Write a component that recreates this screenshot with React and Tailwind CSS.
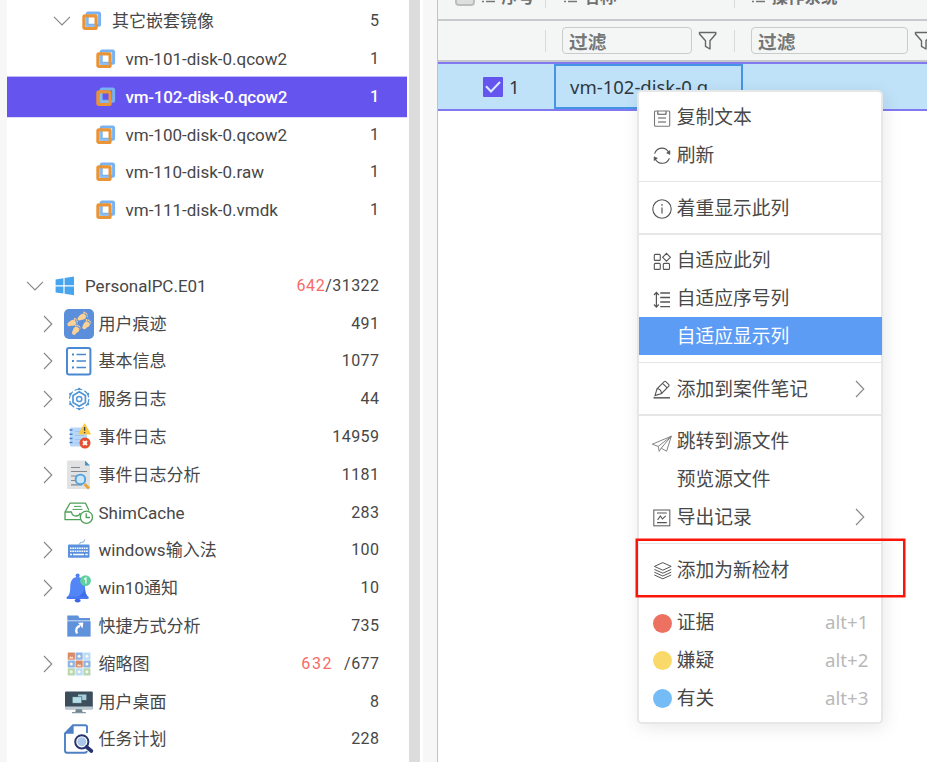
import React from "react";

const CJK = "font-['Roboto','Noto_Sans_CJK_SC',sans-serif]";
const NOTO = "font-['Noto_Sans','Noto_Sans_CJK_SC',sans-serif]";

function Svg({ w, h, className = "", children }) {
  return (
    <svg width={w} height={h} viewBox={`0 0 ${w} ${h}`} fill="none" className={`shrink-0 ${className}`}>
      {children}
    </svg>
  );
}

const DiskIcon = () => (
  <Svg w={20} h={20}>
    <rect x="5.2" y="1.9" width="12.4" height="12.4" rx="1" stroke="#78b2f0" strokeWidth="3" />
    <rect x="1.9" y="4.9" width="12.2" height="12.6" rx="1" stroke="#eb9435" strokeWidth="3.2" />
    <path d="M4.4 6.5V14.9H12.5" stroke="#8fbdec" strokeWidth="1.9" />
  </Svg>
);

const WindowsIcon = () => (
  <Svg w={20} h={20}>
    <path d="M0.6 3.4 8.4 2.2V9.2H0.6zM9.6 2 19 0.6V9.2H9.6zM0.6 10.4H8.4V17.6L0.6 16.6zM9.6 10.4H19V19.2L9.6 17.8z" fill="#47a4ee" />
  </Svg>
);

const foot = (
  <g fill="#fbd195">
    <path d="M-1.5 -4C1.8 -5.2 4.2 -3.2 3.5 -0.8C3 1 2.2 1.6 2 3.6C1.8 5.8 -1.9 6 -2.3 3.6C-2.6 1.4 -3.9 -2.8 -1.5 -4z" />
    <circle cx="-2.6" cy="-5" r="1.1" />
    <circle cx="-0.6" cy="-6" r="0.9" />
    <circle cx="1.3" cy="-5.9" r="0.8" />
    <circle cx="3" cy="-4.9" r="0.7" />
  </g>
);
const FootIcon = () => (
  <Svg w={30} h={30}>
    <rect width="30" height="30" rx="5" fill="#5b8edb" />
    <g transform="translate(8 14) rotate(62) scale(.9)">{foot}</g>
    <g transform="translate(18 8) rotate(55) scale(.9)">{foot}</g>
    <g transform="translate(11.5 21.5) rotate(30) scale(.9)">{foot}</g>
    <g transform="translate(22 16) rotate(35) scale(.9)">{foot}</g>
  </Svg>
);

const ListIcon = () => (
  <Svg w={30} h={30}>
    <rect x="3" y="1.9" width="23.4" height="26.6" rx="2" stroke="#4a88d2" strokeWidth="2" />
    <path d="M12.5 8.5H22M12.5 15H22M12.5 21.5H22" stroke="#4a88d2" strokeWidth="1.4" />
    <path d="M8 8.5h2M8 15h2M8 21.5h2" stroke="#4a88d2" strokeWidth="1.8" />
  </Svg>
);

const HexIcon = () => (
  <Svg w={30} h={30}>
    <g stroke="#5196d6">
      <circle cx="15.2" cy="15" r="9.7" strokeDasharray="8 2.16" strokeWidth="1.1" />
      <path d="M15.2 7.8 21.4 11.4V18.6L15.2 22.2 9 18.6V11.4z" strokeWidth="1.7" strokeLinejoin="round" />
      <circle cx="15.2" cy="15" r="2.6" strokeWidth="1.5" />
    </g>
    <g fill="#5196d6">
      <circle cx="15.2" cy="5" r="1.3" /><circle cx="15.2" cy="25" r="1.3" />
      <circle cx="6.3" cy="9.9" r="1.2" /><circle cx="24.1" cy="9.9" r="1.2" />
      <circle cx="6.3" cy="20.1" r="1.2" /><circle cx="24.1" cy="20.1" r="1.2" />
    </g>
  </Svg>
);

const EventIcon = () => (
  <Svg w={30} h={30}>
    <rect x="6" y="5.5" width="17" height="19" rx="1" fill="#b6d6fa" />
    <path d="M11 9.5h9M11 13.5h9M11 17.5h7M11 21h6" stroke="#9fc5f3" strokeWidth="1" />
    <path d="M5.5 8h3M5.5 12.2h3M5.5 16.4h3M5.5 20.6h3" stroke="#4c7fc0" strokeWidth="1.5" />
    <path d="M20.6 2 26.2 12H15z" fill="#fbc940" stroke="#fbc940" strokeWidth="1.2" strokeLinejoin="round" />
    <path d="M20.6 5v3.8M20.6 10v1.3" stroke="#444" strokeWidth="1.4" />
    <circle cx="21" cy="21" r="5.5" fill="#e84e2c" />
    <path d="M19 19l4 4M23 19l-4 4" stroke="#fff" strokeWidth="1.9" />
  </Svg>
);

const AnalysisIcon = () => (
  <Svg w={30} h={30}>
    <path d="M3 1.5Q3 .5 4 .5H21L26 5.5V28Q26 29 25 29H4Q3 29 3 28z" fill="#e1e2e4" />
    <path d="M21 .5 26 5.5H21z" fill="#4695c8" />
    <path d="M7 7.5h9M7 11.5h16M7 16h8M7 20.5h6M7 24.8h11" stroke="#85878a" strokeWidth="1.2" />
    <circle cx="16.4" cy="19.4" r="4.8" fill="#cfe5f8" stroke="#4da2df" strokeWidth="1.9" />
    <path d="M20.5 24 25 28.4" stroke="#e7a23b" strokeWidth="2.8" />
  </Svg>
);

const ShimIcon = () => (
  <Svg w={30} h={30}>
    <g stroke="#4da058" strokeWidth="1.3" strokeLinejoin="round">
      <path d="M16 21.6H1V14L6 5.2H21.5L25 12.5" />
      <path d="M1 14H7.5Q8 18 12 18 15.5 18 16.3 15" />
      <path d="M10 8.4H17.5M8.5 11.4H18.5" strokeWidth="1" />
      <circle cx="22.4" cy="19.2" r="6.1" fill="#fff" />
      <path d="M22.2 15.2V19.5H26" />
    </g>
  </Svg>
);

const KeyboardIcon = () => (
  <Svg w={30} h={30}>
    <path d="M15.5 9.5Q15.5 7.2 17.5 7.4 20.5 7.6 20.8 4.5" stroke="#80a9df" strokeWidth="1" />
    <rect x="4" y="9.5" width="21.5" height="13.3" rx="1" fill="#5b91dc" />
    <path d="M6 13.2h18M6 16.2h18" stroke="#fff" strokeWidth="1.6" strokeDasharray="1.6 .7" />
    <path d="M6 19.4h2M9 19.4h11M21.3 19.4h2.4" stroke="#fff" strokeWidth="1.5" />
  </Svg>
);

const BellIcon = () => (
  <Svg w={30} h={30}>
    <circle cx="13.6" cy="2.4" r="2" fill="#4b7df4" />
    <path d="M13.6 4C8 4 6.4 9 6.3 13 6.2 19 5.6 21.5 3 24.5H24.5C21.8 21.5 21 19 21 13 21 8 18.5 4 13.6 4z" fill="#5285f5" />
    <path d="M21 15Q18 23 12 24.5H24.5C21.5 21 21.2 19 21 15z" fill="#3f6eeb" />
    <rect x="2.5" y="23.6" width="22.2" height="2.4" rx="1.2" fill="#4778f2" />
    <ellipse cx="13.6" cy="27.6" rx="3" ry="1.8" fill="#3c65e5" />
    <circle cx="21.5" cy="7.6" r="5.4" fill="#60d09f" />
    <path d="M20 6.2 21.9 5V10.6" stroke="#fff" strokeWidth="1.2" />
  </Svg>
);

const ShortcutIcon = () => (
  <Svg w={30} h={30}>
    <path d="M3.3 4.5H14L15.5 7H26V9.4H3.3z" fill="#5f92da" />
    <rect x="3.3" y="10.2" width="23.3" height="15.4" fill="#5f92da" />
    <path d="M13 22.5C11 18.5 13 15.5 16 15" stroke="#fff" strokeWidth="2.3" />
    <path d="M14 11.8 19.3 11.5 18.6 17.6z" fill="#fff" />
  </Svg>
);

const cells = ["#d98a67", "#8eb4e8", "#b9dcf8", "#8eb4e8", "#d98a67", "#8eb4e8", "#b8d8b4", "#b9dcf8", "#b8d8b4"];
const ThumbIcon = () => (
  <Svg w={30} h={30}>
    {cells.map((c, i) => {
      const x = 3.7 + (i % 3) * 7.8, y = 3.6 + Math.floor(i / 3) * 7.8;
      const warm = c === "#d98a67";
      return (
        <g key={i}>
          <rect x={x} y={y} width="7.2" height="7.2" rx=".4" fill={c} />
          {warm
            ? <path d={`M${x + 1.2} ${y + 5.8}l1.6-2.2 1.2 1.1.9-.7 1 1.8z`} fill="#ffe3c7" />
            : <circle cx={x + 3.6} cy={y + 3.6} r="1.5" fill="#fff8df" />}
        </g>
      );
    })}
  </Svg>
);

const DesktopIcon = () => (
  <Svg w={30} h={30}>
    <rect x="1" y="4.5" width="27.8" height="17.8" rx="1" fill="#3c4e5b" />
    <path d="M1 19.5H28.8V21.3Q28.8 22.3 27.8 22.3H2Q1 22.3 1 21.3z" fill="#bccbd3" />
    <rect x="14" y="7.5" width="8.4" height="5.6" fill="#a5cfdc" />
    <rect x="8.2" y="9.8" width="9.6" height="6.4" fill="#b4dfe9" stroke="#3c4e5b" strokeWidth=".6" />
    <path d="M11.8 22.3H18L18.5 25H11.3z" fill="#71858f" />
    <path d="M8 25.6H21.8" stroke="#8297a1" strokeWidth="1.3" />
  </Svg>
);

const TaskIcon = () => (
  <Svg w={30} h={30}>
    <path d="M23 9V3Q23 1.2 21.2 1.2H9L1 9.5V26.4Q1 28.8 3.4 28.8H20.5Q22.6 28.8 23 27" stroke="#4d80c5" strokeWidth="1.9" />
    <path d="M9.6 .8V9.8H.8z" fill="#4d80c5" />
    <circle cx="17.8" cy="17.8" r="6.6" fill="#fff" stroke="#26356f" strokeWidth="2" />
    <circle cx="17.8" cy="17.8" r="4.5" fill="#a9c8e9" />
    <path d="M22.6 23 27.4 27" stroke="#26356f" strokeWidth="3.6" strokeLinecap="round" />
  </Svg>
);

const ChevronDown = () => (
  <Svg w={18} h={18}><path d="M1 4.8 9 13 17 4.8" stroke="#858585" strokeWidth="1.1" /></Svg>
);
const ChevronRight = () => (
  <Svg w={12} h={18}><path d="M2 1 9.8 9 2 17" stroke="#858585" strokeWidth="1.1" /></Svg>
);

const tree = [
  { level: 1, open: true, icon: DiskIcon, label: "其它嵌套镜像", count: "5" },
  { level: 2, icon: DiskIcon, label: "vm-101-disk-0.qcow2", count: "1" },
  { level: 2, icon: DiskIcon, label: "vm-102-disk-0.qcow2", count: "1", selected: true },
  { level: 2, icon: DiskIcon, label: "vm-100-disk-0.qcow2", count: "1" },
  { level: 2, icon: DiskIcon, label: "vm-110-disk-0.raw", count: "1" },
  { level: 2, icon: DiskIcon, label: "vm-111-disk-0.vmdk", count: "1" },
  null,
  { level: 0, open: true, icon: WindowsIcon, label: "PersonalPC.E01", hot: "642", count: "/31322" },
  { level: 3, more: true, icon: FootIcon, label: "用户痕迹", count: "491" },
  { level: 3, more: true, icon: ListIcon, label: "基本信息", count: "1077" },
  { level: 3, more: true, icon: HexIcon, label: "服务日志", count: "44" },
  { level: 3, more: true, icon: EventIcon, label: "事件日志", count: "14959" },
  { level: 3, more: true, icon: AnalysisIcon, label: "事件日志分析", count: "1181" },
  { level: 3, icon: ShimIcon, label: "ShimCache", count: "283" },
  { level: 3, more: true, icon: KeyboardIcon, label: "windows输入法", count: "100" },
  { level: 3, more: true, icon: BellIcon, label: "win10通知", count: "10" },
  { level: 3, icon: ShortcutIcon, label: "快捷方式分析", count: "735" },
  { level: 3, more: true, icon: ThumbIcon, label: "缩略图", hot: "632", wide: true, count: "/677" },
  { level: 3, icon: DesktopIcon, label: "用户桌面", count: "8" },
  { level: 3, icon: TaskIcon, label: "任务计划", count: "228" },
];

const pads = ["pl-[19px]", "pl-[46px]", "pl-[89px]", "pl-[35px]"];
const gaps = ["gap-[10px]", "gap-[10px]", "gap-[9.5px]", "gap-[4.5px]"];

function TreeRow({ row }) {
  if (!row) return <div className="h-[37.8px]" />;
  const Icon = row.icon;
  return (
    <div className={`flex h-[37.8px] items-center pr-[27.5px] ${pads[row.level]} ${row.selected ? "bg-[#6654ee] font-medium tracking-[-0.22px] text-white shadow-[0_-1.4px_0_#6654ee,0_1.2px_0_#6654ee]" : "text-[#474747]"}`}>
      {row.level !== 2 && (
        <span className={row.level === 3 ? "w-[22px]" : "w-[29px]"}>
          {row.open && <ChevronDown />}
          {row.more && <ChevronRight />}
        </span>
      )}
      <span className={`flex items-center ${gaps[row.level]}`}>
        <Icon />
        <span className="whitespace-nowrap text-[17px] leading-6">{row.label}</span>
      </span>
      <span className="ml-auto whitespace-nowrap text-[16px] leading-6 tracking-[0.45px]">
        {row.hot && <span className={row.wide ? "mr-[11px] tracking-[1.6px] text-[#f66b66]" : "tracking-[0.6px] text-[#f66b66]"}>{row.hot}</span>}
        {row.count}
      </span>
    </div>
  );
}

const SortGlyph = () => (
  <Svg w={16} h={16}>
    <path d="M1 3h2M5 3h9M1 8h2M5 8h9M1 12.6h2M5 12.6h9" stroke="#777" strokeWidth="1.5" />
  </Svg>
);
const Funnel = () => (
  <Svg w={20} h={20}>
    <path d="M1.5 1.5H17.8V3L12 9.8V18L7.5 15.4V9.8L1.5 3z" stroke="#666" strokeWidth="1.4" strokeLinejoin="round" />
  </Svg>
);

const HeadCell = ({ label, className }) => (
  <div className={`flex items-center gap-[4.5px] ${className}`}>
    <SortGlyph />
    <span className="whitespace-nowrap text-[16.5px] font-bold leading-[22px] text-[#707070]">{label}</span>
  </div>
);

const FilterBox = ({ className }) => (
  <div className={`flex h-[27px] shrink-0 items-center rounded-[4px] border-[1.5px] border-[#cacccc] pl-[6px] pt-[2px] text-[18.7px] font-bold leading-6 text-[#767878] ${className}`}>过滤</div>
);

function Table() {
  return (
    <main className={`min-w-0 flex-1 overflow-hidden border-l border-[#bfc3c8] bg-white ${NOTO}`}>
      <div className="flex h-[21px] overflow-hidden border-b-2 border-[#c6cacd] bg-[#f4f6f6]">
        <div className="-mt-[14px] flex h-[22px] shrink-0">
          <div className="flex w-[108px] shrink-0 items-center border-r border-[#d8dadb] pl-[17px]">
            <span className="mt-[-3px] h-5 w-5 rounded-[4px] border-2 border-[#bdbdbd] bg-[#dedede]" />
            <HeadCell label="序号" className="ml-[6px]" />
          </div>
          <HeadCell label="名称" className="w-[188px] shrink-0 pl-[17px]" />
          <HeadCell label="操作系统" className="border-l border-[#d8dadb] pl-[16px]" />
        </div>
      </div>
      <div className="flex h-[41px] items-center overflow-hidden border-b-2 border-[#c4c8cb] bg-[#f4f6f6]">
        <div className="h-[22px] w-[108px] shrink-0 border-r border-[#d8dadb]" />
        <FilterBox className="ml-4 mr-[6px] w-[130px]" />
        <Funnel />
        <div className="ml-[16px] h-[22px] w-px shrink-0 bg-[#d8dadb]" />
        <FilterBox className="ml-[16px] mr-[6px] w-[157px]" />
        <Funnel />
      </div>
      <div className="flex h-[49px] border-y-2 border-[#8179f0] bg-[#bfe2f9] text-[18.5px] text-[#303840]">
        <div className="flex w-[116px] shrink-0 items-center pl-[45px] pt-px">
          <span className="flex h-5 w-5 items-center justify-center rounded-[1px] bg-[#6654ee]">
            <svg width="20" height="20" viewBox="0 0 20 20" fill="none"><path d="M3 9.2 8 14.5 17 5" stroke="#d8ecff" strokeWidth="2" /></svg>
          </span>
          <span className="ml-[6px]">1</span>
        </div>
        <div className="flex w-[189px] shrink-0 items-center border-2 border-[#4595e4] pl-[14px] pt-px">
          <span className="whitespace-nowrap">vm-102-disk-0.q</span>
        </div>
      </div>
    </main>
  );
}

const M = ({ children }) => (
  <svg width="22" height="22" viewBox="0 0 22 22" fill="none" stroke="#555" strokeWidth="1.1" className="mt-[3px] shrink-0">{children}</svg>
);
const CopyIcon = () => (
  <M><rect x="3.5" y="3" width="15.2" height="15.2" rx="1" stroke="#777" /><path d="M6.8 3.2V6.2H15V3.2M7 10H15M7 14H15" /></M>
);
const RefreshIcon = () => (
  <M><path d="M3.6 8.6C6 1.8 14.6 1.2 17.8 7.6M18.4 13.2C15.8 19.8 7.4 20 4.2 13.9" /><path d="M18.9 5.6V9.4L15.6 8zM3.1 15.6V11.8L6.4 13.2z" fill="#555" strokeWidth=".6" /></M>
);
const InfoIcon = () => (
  <M><circle cx="11" cy="11" r="9.2" /><path d="M11 9.5V15.5M11 6V7.8" strokeWidth="1.2" /></M>
);
const GridIcon = () => (
  <M><rect x="3.3" y="3.4" width="6" height="6" rx="1" /><rect x="3.3" y="12.4" width="6" height="6" rx="1" /><rect x="12.3" y="12.4" width="6.2" height="6" rx="1" /><path d="M15.5 2.4 19.4 6.3 15.5 10.2 11.6 6.3z" /></M>
);
const SpacingIcon = () => (
  <M><path d="M9.2 4H19M9.2 8.5H19M9.2 13H19M9.2 17.6H19" strokeWidth="1.4" /><path d="M5.4 4V17.5M3 6 5.4 3.4 7.8 6M3 15.5 5.4 18.1 7.8 15.5" strokeWidth="1.2" /></M>
);
const PenIcon = () => (
  <M><path d="M4 16.6 6 9.8 13.2 2.6Q14 2 14.8 2.6L17.8 5.6Q18.4 6.4 17.8 7.2L10.6 14.4zM11.6 4.3 16.2 8.9M6 9.8Q9.8 9.8 10.6 14.4" /><path d="M2.5 18.8H19" stroke="#666" strokeWidth="1.6" /></M>
);
const PlaneIcon = () => (
  <M><path d="M1.3 12.2 20.3 4.2 15.6 19.2 10.2 16.2M1.3 12.2 7.2 14.4 20.3 4.2 10.2 16.2 8.2 19.4 7.2 14.4" stroke="#777" strokeWidth=".9" strokeLinejoin="round" /></M>
);
const ExportIcon = () => (
  <M><rect x="2.8" y="3" width="16" height="15.8" stroke="#666" /><path d="M6 6H15.8M6 15.6H15.8M6.6 12.8 9.4 9 11.4 12 14.8 8.8" /></M>
);
const LayersIcon = () => (
  <M><path d="M11.8 2.6 20.2 6.4 11.8 10.2 3.4 6.4zM3.4 9.4 11.8 13.2 20.2 9.4M3.4 12.2 11.8 16 20.2 12.2M3.4 15 11.8 18.8 20.2 15" strokeWidth="1" /></M>
);

const groups = [
  [{ icon: CopyIcon, label: "复制文本" }, { icon: RefreshIcon, label: "刷新" }],
  [{ icon: InfoIcon, label: "着重显示此列" }],
  [{ icon: GridIcon, label: "自适应此列" }, { icon: SpacingIcon, label: "自适应序号列" }, { label: "自适应显示列", active: true }],
  [{ icon: PenIcon, label: "添加到案件笔记", sub: true }],
  [{ icon: PlaneIcon, label: "跳转到源文件" }, { label: "预览源文件" }, { icon: ExportIcon, label: "导出记录", sub: true }],
  [{ icon: LayersIcon, label: "添加为新检材" }],
  [
    { dot: "bg-[#ed7161]", label: "证据", hint: "alt+1" },
    { dot: "bg-[#f8d96a]", label: "嫌疑", hint: "alt+2" },
    { dot: "bg-[#75bbf5]", label: "有关", hint: "alt+3" },
  ],
];

function MenuItem({ item }) {
  const Icon = item.icon;
  return (
    <div className={`-mr-px flex h-[37.8px] items-center pl-[12.4px] pr-[13.5px] ${item.active ? "bg-[#5d9cf5] text-white" : "text-[#484848]"}`}>
      <span className="flex w-[25.4px] shrink-0">
        {Icon && <Icon />}
        {item.dot && <span className={`ml-[1.8px] mt-[2px] h-[19px] w-[19px] rounded-full ${item.dot}`} />}
      </span>
      <span className="whitespace-nowrap text-[18.75px] leading-6">{item.label}</span>
      {item.sub && <span className="ml-auto mr-[3px]"><ChevronRight /></span>}
      {item.hint && <span className="ml-auto text-[18.7px] text-[#b8b8b8]">{item.hint}</span>}
    </div>
  );
}

const Separator = ({ thick }) => (
  <div className="flex h-[14.9px] items-center">
    <div className={`w-full bg-[#e6e6e6] ${thick ? "h-[2px]" : "h-px"}`} />
  </div>
);

function ContextMenu() {
  return (
    <div className={`absolute left-[637px] top-[90px] h-[634px] w-[246px] rounded-[5px] border-2 border-[#e6e7e8] bg-white pt-[6.2px] shadow-[2px_4px_18px_rgba(0,0,0,0.09)] ${NOTO}`}>
      {groups.map((items, g) => (
        <React.Fragment key={g}>
          {g > 0 && <Separator thick={g === 2 || g === 4} />}
          {items.map((item) => <MenuItem key={item.label} item={item} />)}
        </React.Fragment>
      ))}
    </div>
  );
}

export default function App() {
  return (
    <div className="relative flex h-[762px] w-[927px] overflow-hidden bg-[#f7f7f7]">
      <aside className={`ml-[7px] w-[402px] shrink-0 bg-white pr-[2px] pt-[2.4px] ${CJK}`}>
        {tree.map((row, i) => <TreeRow key={i} row={row} />)}
      </aside>
      <div className="mr-[14px] w-[14px] shrink-0 border-r-[3px] border-white bg-[#dcdcdc]" />
      <Table />
      <ContextMenu />
      <div className="absolute left-[636px] top-[539px] h-[58px] w-[269px] border-2 border-[#fb1508] shadow-[0_0_0_0.5px_#fb1508]" />
    </div>
  );
}
